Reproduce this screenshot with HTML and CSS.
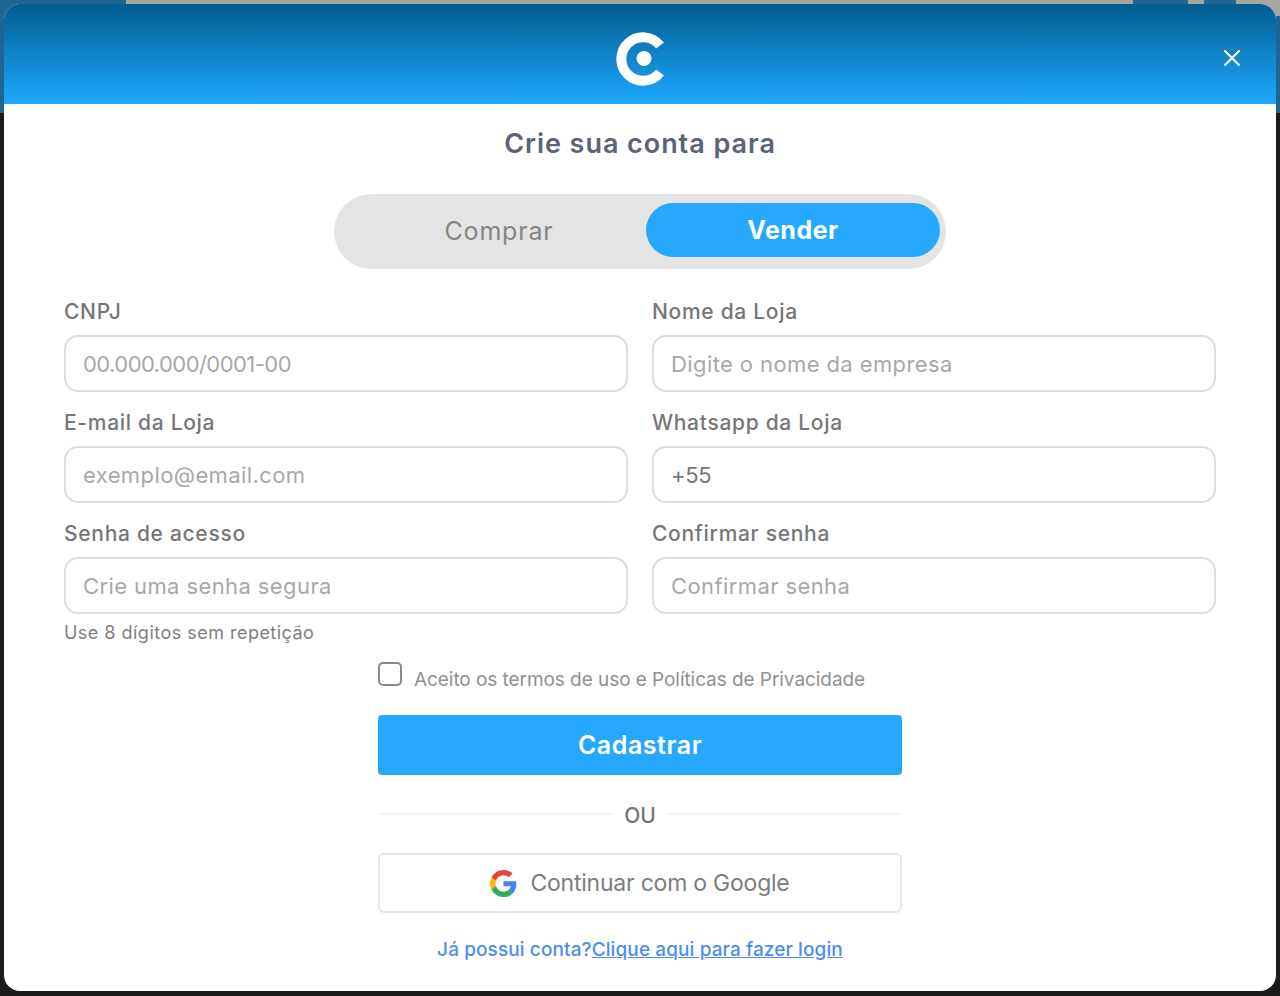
FILE: index.html
```html
<!DOCTYPE html>
<html lang="pt-BR">
<head>
    <meta charset="UTF-8">
    <meta name="viewport" content="width=device-width, initial-scale=1.0">
    <title>Crie sua conta</title>
    <link rel="stylesheet" href="styles.css">
</head>
<body>

    <div class="backdrop">
        <div class="backdrop-blue"></div>
        <div class="backdrop-gray"></div>
        <div class="backdrop-tab"></div>
        <div class="backdrop-dot"></div>
        <div class="backdrop-gray-end"></div>
        <div class="backdrop-right"></div>
    </div>

    <div class="modal">
        <div class="modal-header">
            <svg class="logo" width="50" height="54" viewBox="0 0 50 54">
                <path d="M44 13.500 A21.700 21.700 0 1 0 44 40.500" fill="none" stroke="#fff" stroke-width="10"/>
                <circle cx="28" cy="26.500" r="7.500" fill="#fff"/>
            </svg>
            <button class="close-button" aria-label="Fechar">
                <svg width="18" height="18" viewBox="0 0 18 18">
                    <path d="M2 2 L16 16 M16 2 L2 16" stroke="#fff" stroke-width="2" stroke-linecap="round"/>
                </svg>
            </button>
        </div>

        <div class="modal-body">
            <h2 class="title">Crie sua conta para</h2>

            <div class="toggle">
                <button class="toggle-option">Comprar</button>
                <button class="toggle-option active">Vender</button>
            </div>

            <form class="form-grid">
                <div class="field">
                    <label>CNPJ</label>
                    <input type="text" class="digits" placeholder="00.000.000/0001-00">
                </div>
                <div class="field">
                    <label>Nome da Loja</label>
                    <input type="text" placeholder="Digite o nome da empresa">
                </div>
                <div class="field">
                    <label>E-mail da Loja</label>
                    <input type="text" placeholder="exemplo@email.com">
                </div>
                <div class="field">
                    <label>Whatsapp da Loja</label>
                    <input type="text" class="filled" value="+55">
                </div>
                <div class="field">
                    <label>Senha de acesso</label>
                    <input type="password" placeholder="Crie uma senha segura">
                    <span class="hint">Use 8 dígitos sem repetição</span>
                </div>
                <div class="field">
                    <label>Confirmar senha</label>
                    <input type="password" placeholder="Confirmar senha">
                </div>
            </form>

            <div class="actions">
                <label class="terms">
                    <span class="checkbox"></span>
                    <span>Aceito os termos de uso e Políticas de Privacidade</span>
                </label>
                <button class="submit-button">Cadastrar</button>
                <div class="divider"><span>OU</span></div>
                <button class="google-button">
                    <svg width="27" height="27" viewBox="0 0 48 48">
                        <path fill="#EA4335" d="M24 9.500c3.500 0 6.700 1.300 9.200 3.400l6.900-6.900C35.900 2.200 30.300 0 24 0 14.600 0 6.500 5.400 2.600 13.200l8 6.200C12.500 13.600 17.800 9.500 24 9.500z"/>
                        <path fill="#4285F4" d="M47 24.500c0-1.600-.2-3.200-.4-4.700H24v9.100h12.900c-.6 3-2.300 5.500-4.800 7.200l7.700 6c4.500-4.200 7.200-10.300 7.200-17.600z"/>
                        <path fill="#FBBC05" d="M10.600 28.600c-.5-1.400-.8-3-.8-4.600s.3-3.200.8-4.600l-8-6.200C.9 16.500 0 20.100 0 24s.9 7.500 2.600 10.800l8-6.200z"/>
                        <path fill="#34A853" d="M24 48c6.500 0 11.900-2.100 15.800-5.800l-7.700-6c-2.100 1.400-4.900 2.300-8.100 2.300-6.200 0-11.500-4.100-13.400-9.900l-8 6.200C6.500 42.600 14.600 48 24 48z"/>
                    </svg>
                    <span>Continuar com o Google</span>
                </button>
                <p class="login-text">Já possui conta?<a href="#">Clique aqui para fazer login</a></p>
            </div>
        </div>
    </div>

</body>
</html>
```

FILE: styles.css
```css
html, body {
    height: 100%;
}

body {
    margin: 0;
    background-color: #1b1b1b;
    font-family: 'Inter', 'Open Sans', Arial, sans-serif;
    overflow: hidden;
}

.backdrop {
    position: absolute;
    top: 0;
    left: 0;
    right: 0;
    height: 113px;
    display: flex;
    background-color: #a6a6a6;
}

.backdrop-blue {
    width: 126px;
    background-color: #1f6593;
}

.backdrop-gray {
    flex: 1;
}

.backdrop-tab {
    width: 55px;
    height: 4px;
    background-color: #1f6593;
    margin-right: 16px;
}

.backdrop-dot {
    width: 32px;
    height: 4px;
    background-color: #1f6593;
}

.backdrop-gray-end {
    width: 44px;
}

.backdrop-right {
    position: absolute;
    top: 16px;
    right: 0;
    bottom: 0;
    width: 4px;
    background-color: #1f6593;
}

.modal {
    position: absolute;
    top: 4px;
    left: 4px;
    width: 1272px;
    height: 987px;
    background-color: #fff;
    border-radius: 16px;
    overflow: hidden;
}

.modal-header {
    height: 100px;
    position: relative;
    display: flex;
    align-items: center;
    justify-content: center;
    background: linear-gradient(180deg, #035c90 0%, #1ea8fe 100%);
}

.logo {
    margin-top: 10px;
    margin-left: 2px;
}

.close-button {
    position: absolute;
    top: 45px;
    right: 35px;
    padding: 0;
    border: none;
    background: none;
    line-height: 0;
}

.modal-body {
    padding: 0 60px;
}

.title {
    margin: 23px 0 0;
    text-align: center;
    font-size: 27px;
    line-height: 34px;
    font-weight: 600;
    letter-spacing: 0.95px;
    color: #5b6375;
}

.toggle {
    width: 612px;
    height: 75px;
    box-sizing: border-box;
    margin: 33px auto 0;
    padding: 9px 6px 12px 18px;
    display: flex;
    background-color: #e4e4e4;
    border-radius: 38px;
}

.toggle-option {
    flex: 1;
    padding: 2px 0 0;
    border: none;
    border-radius: 27px;
    background: none;
    color: #858585;
    font-family: inherit;
    font-size: 25px;
    letter-spacing: 0.8px;
}

.toggle-option.active {
    padding: 0;
    background-color: #27a8ff;
    color: #fff;
    font-weight: 700;
    letter-spacing: 0.5px;
}

.form-grid {
    margin-top: 25px;
    display: grid;
    grid-template-columns: 564px 564px;
    column-gap: 24px;
    row-gap: 13px;
}

.field {
    display: flex;
    flex-direction: column;
}

.field label {
    height: 41px;
    line-height: 36px;
    font-size: 21px;
    font-weight: 500;
    letter-spacing: 0.7px;
    color: #767676;
}

.field input {
    height: 57px;
    flex-shrink: 0;
    box-sizing: border-box;
    padding: 0 17px;
    border: 2px solid #dcdcdc;
    border-radius: 14px;
    font-family: inherit;
    font-size: 22px;
    letter-spacing: 0.4px;
    color: #777;
    outline: none;
}

.field input.digits {
    letter-spacing: -0.55px;
}

.field input.filled {
    letter-spacing: -0.3px;
}

.field input::placeholder {
    color: #a8a8a8;
}

.hint {
    margin-top: 7px;
    font-size: 18px;
    line-height: 24px;
    letter-spacing: 0.48px;
    color: #808080;
}

.actions {
    width: 524px;
    margin: 17px auto 0;
}

.terms {
    display: flex;
    align-items: flex-start;
    font-size: 19px;
    letter-spacing: -0.06px;
    color: #909090;
}

.checkbox {
    width: 24px;
    height: 24px;
    flex-shrink: 0;
    box-sizing: border-box;
    margin-right: 12px;
    border: 2px solid #8a8a8a;
    border-radius: 5px;
}

.terms span:last-child {
    margin-top: 3px;
    line-height: 30px;
    white-space: nowrap;
}

.submit-button {
    width: 100%;
    height: 60px;
    margin-top: 20px;
    border: none;
    border-radius: 4px;
    background-color: #27a8ff;
    color: #fff;
    font-family: inherit;
    font-size: 25px;
    font-weight: 600;
    letter-spacing: 0.55px;
}

.divider {
    margin-top: 28px;
    display: flex;
    align-items: center;
    gap: 12px;
    font-size: 21px;
    line-height: 26px;
    font-weight: 500;
    color: #7a7570;
}

.divider::before,
.divider::after {
    content: "";
    flex: 1;
    height: 2px;
    margin-top: -4px;
    background-color: #f3f3f3;
}

.google-button {
    width: 100%;
    height: 60px;
    margin-top: 24px;
    display: flex;
    align-items: center;
    justify-content: center;
    gap: 13px;
    border: 2px solid #e2e5ec;
    border-radius: 6px;
    background-color: #fff;
    color: #7d7d7d;
    font-family: inherit;
    font-size: 23px;
    letter-spacing: -0.23px;
}

.login-text {
    margin: 22px 0 0;
    text-align: center;
    font-size: 19px;
    line-height: 30px;
    font-weight: 500;
    letter-spacing: 0.1px;
    color: #4c8df0;
    white-space: nowrap;
}

.login-text a {
    color: #4c8df0;
}
```
